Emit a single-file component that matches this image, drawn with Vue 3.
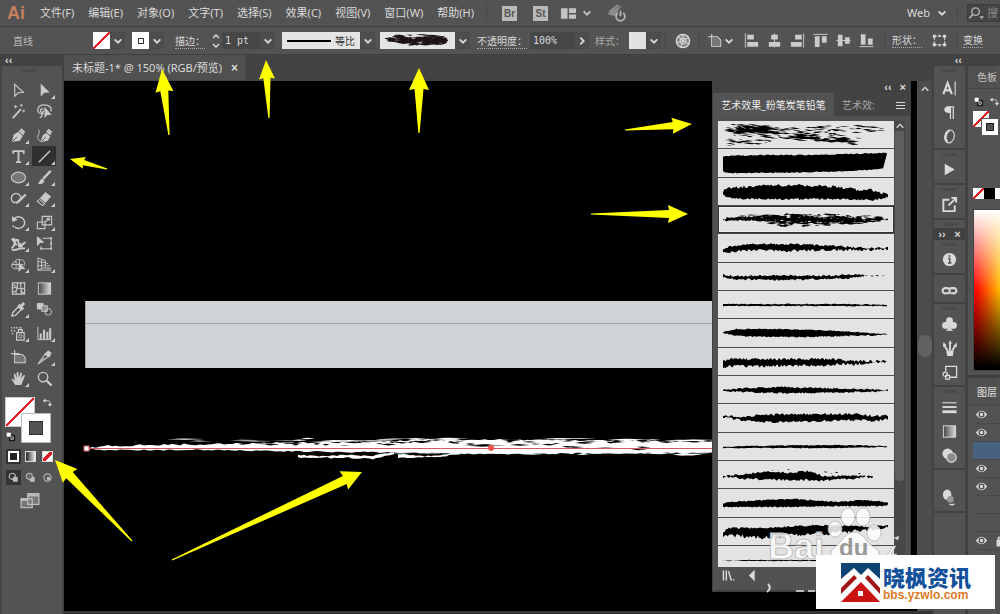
<script setup>
const menus = ['文件(F)', '编辑(E)', '对象(O)', '文字(T)', '选择(S)', '效果(C)', '视图(V)', '窗口(W)', '帮助(H)']

const chev = '<path d="M1.5 3l3 3 3-3" stroke-width="1.6"/>'

// 18 x 18 glyphs, drawn with the current text colour
const icons = {
  select: '<path d="M5 2.5v12.5l3.8-3.6 5.4-.4z" stroke-width="1.2"/>',
  direct: '<path d="M5 1.500v14l4-4 5.500-.3z" fill="currentColor" stroke="none"/>',
  wand: '<path d="M3 16L11.500 6.500" stroke-width="2"/><path d="M6 2v4M4 4h4M12 1v3M10.500 2.500h3M14.500 7v3M13 8.500h3"/>',
  lasso: '<path d="M8 11C3 12 1 9.500 2 6s6-5 10-3.500 5 4 3.500 6.500M8 6.500c-3-1-4 1-3 2.500s3 1 3-1M6 11c1 2 0 4-2 4.500" stroke-width="1.400"/><path d="M9 4v12l3-3.200 4.500-.2z" fill="currentColor" stroke="none"/>',
  pen: '<path d="M2 16l2-8 5-3 4.500 4.500-3 5z" fill="currentColor" stroke="none"/><path d="M10 3.500l4.500 4.500M11.500 2l4 4" stroke-width="2"/><path d="M2.500 15.500l5-5" stroke="#535353"/>',
  curve: '<path d="M2 3c4 1-1 6 0 9 .5 2 2 3 4 3.500"/><path d="M5 16l2-7 4-3 4 4-2.500 4.500z" fill="currentColor" stroke="none"/><path d="M11.500 4l4 4M13 2.500l3.500 3.500" stroke-width="2"/><path d="M6 15l4.500-4.500" stroke="#535353"/>',
  type: '<path d="M3.500 6V3.300h11V6M9 3.300v12M6.300 15h5.400" stroke-width="1.900"/>',
  line: '<path d="M3 15L15 3" stroke-width="1.500"/>',
  ellipse: '<ellipse cx="9" cy="9" rx="7.500" ry="5.700" fill="#777" stroke-width="1.200"/>',
  brush: '<path d="M7.500 10.500L15.500 2" stroke-width="2.600"/><path d="M1.500 15.500c3 0 1.500-4 4.500-4.800 2.500 0 3.500 2 2 3.700-1.500 1.800-4.500 2-6.500 1.100z" fill="currentColor" stroke="none"/>',
  shaper: '<path d="M8 12.500C4 14.500 1 12 1.500 8S6 2.500 9 4.500s2.500 3 2 5" stroke-width="1.500"/><path d="M6 15l2-4 8-7 1.500 1.500-8 8z" fill="currentColor" stroke="none"/>',
  eraser: '<path d="M3 10l7-8 6 5-7 8z" fill="currentColor" stroke="none"/><path d="M2.500 10.500L1.500 12l5.500 4.500 2-1.500" stroke-width="1.200"/><path d="M4 9l6 5" stroke="#535353"/>',
  rotate: '<path d="M4 5.500C8 1 15 3 15.500 9c0 5-6 8-10.500 5" stroke-width="1.600"/><path d="M3 12l1 2" stroke-width="1.500"/><path d="M2 2l.5 6.500L8 6z" fill="currentColor" stroke="none"/>',
  scale: '<path d="M1.500 8.500h8v7h-8zM6.500 2.500h10v9H6.500zM9 9l5-4.500M11 4.500h3v3" stroke-width="1.200"/>',
  width: '<path d="M1.500 14c4-1 3-9 6-9s0 7 3 7 3-4 6-4M2 4l5 7M2 15.500c5 2 8-3 14-1" stroke-width="2"/><circle cx="4" cy="5" r="1.500" fill="currentColor"/><circle cx="11" cy="11" r="2" fill="currentColor"/>',
  free: '<path d="M1 1v11l3.500-3.500L9 8z" fill="currentColor" stroke="none"/><path d="M7 3.500h9v11H5.500V12" stroke-width="1.100"/><path d="M15 2.500h2v2h-2zM15 13.500h2v2h-2zM4.500 13.500h2v2h-2zM15 8h2v2h-2z" fill="currentColor" stroke="none"/>',
  builder: '<path d="M9 13C4 15 1 12 2 9s4-2 4-4 8-2 9 1 0 4-1 5M2 9h12M6.500 5v8M10 4v5"/><path d="M9 7v10l3-3 4.500-.3z" fill="currentColor" stroke="none"/>',
  perspective: '<path d="M2 2v13h14M2 2l8 3v7l-8 3M2 6l8 1M2 10.500l8-1M6 3.500v10M11 8h2M11 10.500h4M10 13h6"/>',
  mesh: '<path d="M2.500 3h13v12h-13zM2.500 9c4-4 8 4 13-1M7 3c4 4-3 8 0 12M11.500 3c-2 4 3 8 0 12M3 5l4 2M11 12l4 2M3 13l4-2" stroke-width="1.200"/>',
  gradient: '<rect x="2.500" y="3" width="13" height="12" fill="url(#tone)"/>',
  dropper: '<path d="M2 16l1-4 6-6 3 3-6 6z" stroke-width="1.500"/><path d="M9 4l5 5M10.500 6.500L15 2" stroke-width="3"/>',
  blend: '<path d="M1.500 2.500h6v6h-6z" fill="currentColor"/><path d="M6 5h6v6H6z" fill="#8c8c8c"/><circle cx="13" cy="11.500" r="3.500"/>',
  spray: '<path d="M7 8h8v8H7zM9 8V5h4v3M9.500 3h3" stroke-width="1.300"/><circle cx="11" cy="12" r="1.800"/><path d="M1 3h1.500M4 3h1.500M6.500 3H8M1 6h1.500M4 6h1.500M2 9h1.500" stroke-width="1.600"/>',
  graph: '<path d="M2 2v13.500h14"/><path d="M5 15V9M8.500 15V5M12 15V7.500M15 15V3.500" stroke-width="2.200"/>',
  artboard: '<path d="M5 1v14M1 5h9M5 14.500h11V9l-3-3H5z" stroke-width="1.300"/><path d="M6 7h6l3 3v4H6z" fill="#777" stroke="none"/>',
  slice: '<path d="M2 16l8-11 3.500 3z" stroke-width="1.200"/><path d="M9 5.500L13 2l3 2-2 4.500z" fill="currentColor"/><path d="M6 12l3-2"/>',
  hand: '<path d="M5.500 16C4 13 2.500 11.500 1.500 9.500c1-.8 2 0 3.500 2L4 4.500c.8-1 1.600-.5 2 .5l1.200 4L7 3c.5-1.200 1.700-1 2 0l.4 5.500L11 3.200c.8-1 1.800-.5 1.700.5L12 9l2.300-3.500c1-.6 1.800 0 1.400 1L13.500 12 12 16z" fill="currentColor" stroke="none"/>',
  zoom: '<circle cx="7.500" cy="7.500" r="5" stroke-width="1.500"/><path d="M11.500 11.500l5 5" stroke-width="2.400"/>',
  character: '<path d="M2.500 15L7 3l4.500 12M4 11h6" stroke-width="2.200"/><path d="M15 1.500v15" stroke-width="1.200"/>',
  paragraph: '<path d="M10 3v13M13 3v13M8 3h6" stroke-width="1.300"/><path d="M10 2.500C5 2 3.500 4 3.500 6s2 4 6.500 3.500z" fill="currentColor" stroke="none"/>',
  opentype: '<ellipse cx="9" cy="9" rx="5" ry="6.800" transform="rotate(15 9 9)" stroke-width="1.200"/><path d="M7 14.500C3.500 12 4.500 5 9 2.500" stroke-width="2"/>',
  play: '<path d="M4 3v12l10.500-6z" fill="currentColor" stroke="none"/>',
  exportIcon: '<path d="M9 4H2.500v12h12v-6" stroke-width="2"/><path d="M8 10l7-7M11 2h5v5" stroke-width="2"/>',
  info: '<circle cx="9" cy="9" r="7" fill="currentColor" stroke="none"/><path d="M7.500 8H9.300v4.500M7.300 12.700h3.800" stroke="#535353" stroke-width="1.500"/><circle cx="9" cy="5.300" r="1.100" fill="#535353" stroke="none"/>',
  link: '<path d="M8 6.500H5a2.800 2.800 0 100 5.500h2.500c1.500 0 2-1.500 1.500-3M10 12h3a2.800 2.800 0 100-5.500h-2.500c-1.500 0-2 1.500-1.500 3" stroke-width="2.200"/>',
  club: '<g fill="currentColor" stroke="none"><circle cx="9" cy="5" r="3.600"/><circle cx="4.800" cy="10" r="3.600"/><circle cx="13.200" cy="10" r="3.600"/><path d="M8 8h2c0 4 .5 6 3 7.500H5C7.500 14 8 12 8 8z"/></g>',
  brushes: '<path d="M5.500 11h8l-1 6h-6z" fill="currentColor" stroke="none"/><path d="M7 11L3.500 6M9.500 11V3M12 11l3-5" stroke-width="2"/><path d="M2 7.500L2.500 2 6 5.500zM8 4l1.500-4 2 4zM13 6.500L17 2.500 16.500 8z" fill="currentColor" stroke="none"/>',
  symbol: '<path d="M5 8V2.500h11.500V14H9" stroke-width="1.400"/><circle cx="4.500" cy="11" r="2.300" stroke-width="1.300"/><path d="M5 12h4v4H5z" stroke-width="1.300"/>',
  stroke: '<path d="M1.500 4h15" stroke-width="1.200"/><path d="M1.500 8.500h15" stroke-width="2"/><path d="M1.500 13.500h15" stroke-width="3"/>',
  transparency: '<circle cx="7" cy="7" r="5.500" fill="currentColor" stroke="none"/><circle cx="11" cy="11" r="5" fill="#8a8a8a" stroke-width="1.400"/>',
  appearance: '<ellipse cx="6.500" cy="6" rx="4.500" ry="5.500" fill="currentColor" stroke="none"/><circle cx="10" cy="11" r="3.500" fill="#999" stroke="none"/><path d="M9 16c2 1 4 1 5-.5" stroke-width="1.500"/>',
  globe: '<circle cx="9" cy="9" r="6.600" fill="#858585" stroke-width="1.400"/><path d="M9 9V2.500M9 9l5.500-3.500M9 9l6 3M9 9l-2 6.500M9 9l-6.500 2M9 9L4 4.500"/><circle cx="9" cy="9" r="3"/>',
  page: '<path d="M5 2v3M1 5h10l3.500 3.500V15H5V5" stroke-width="1.100"/><path d="M5.500 6h5l3.500 3v5.500H5.500z" fill="#777" stroke="none"/>',
  al: '<path d="M2.500 1.500v15"/><path d="M4.500 3h7v5h-7zM4.500 10.500h11.500v5H4.500z" fill="currentColor" stroke="none"/>',
  ac: '<path d="M9 1.500v15"/><path d="M5.500 3h7v5h-7zM3 10.500h12v5H3z" fill="currentColor" stroke="none"/>',
  ar: '<path d="M15.500 1.500v15"/><path d="M6.500 3h7v5h-7zM2 10.500h11.500v5H2z" fill="currentColor" stroke="none"/>',
  at: '<path d="M1.500 2.500h15"/><path d="M3 4.500h5V16H3zM10.500 4.500h5v7h-5z" fill="currentColor" stroke="none"/>',
  am: '<path d="M1.500 9h15"/><path d="M3 3h5v12H3zM10.500 5.500h5v7h-5z" fill="currentColor" stroke="none"/>',
  ab: '<path d="M1.500 15.500h15"/><path d="M3 2.500h5v11H3zM10.500 7h5v6.500h-5z" fill="currentColor" stroke="none"/>',
  bounds: '<path d="M3.500 4.500h11v9h-11z" stroke-dasharray="3 1"/><path d="M2 3h3v3H2zM13 3h3v3h-3zM2 12h3v3H2zM13 12h3v3h-3zM8 3h2v2H8zM8 13h2v2H8z" fill="currentColor" stroke="none"/>',
  arrange: '<path d="M1 3.500h7v11H1zM9.500 3.500H17v5H9.500zM9.500 10H17v4.500H9.500z" fill="currentColor" stroke="none"/>',
  gpu: '<path d="M1 10L14 2 8 12z" fill="#8d8d8d" stroke="none"/><path d="M3 8l8-6" stroke="#8d8d8d" stroke-width="2"/><path d="M10.500 9a4 4 0 105 0M13 7v5" stroke-width="1.600"/>',
  eye: '<path d="M3 9q6-8 12 0q-6 8-12 0z" fill="#d8d8d8" stroke="none"/><circle cx="9" cy="9" r="2.500" stroke="#4c4c4c" stroke-width="1.300"/>',
  swap: '<path d="M5 6h5q3 0 3 3v4" stroke-width="1.300"/><path d="M1.500 6L6 2.500v7zM9.500 11h7L13 16z" fill="currentColor" stroke="none"/>',
  defaults: '<path d="M7 7h9v9H7z" fill="#111" stroke="#111"/><path d="M9.500 9.500h4v4h-4z" stroke-width="1.500"/><path d="M2 2h8v8H2z" fill="#fff" stroke="#222"/>',
  mode1: '<circle cx="7" cy="7" r="5" stroke-width="1.800"/><path d="M8 8h8v8H8z" fill="currentColor" stroke="none"/>',
  mode2: '<path d="M8 8h8v8H8z" fill="currentColor" stroke="none"/><circle cx="7" cy="7" r="5" fill="#666" stroke-width="1.800"/>',
  mode3: '<circle cx="9" cy="9" r="6" stroke-width="1.800"/><path d="M8 8h5v5H8z" fill="currentColor" stroke="none"/>',
  screen: '<path d="M1 7h10v8H1zM7 2.500h10V12H7z" fill="#777" stroke-width="1.200"/><path d="M7 4h10M1 8h6" stroke-width="2"/>',
  library: '<path d="M2 2v14M6 2v14M9 3l4 13" stroke-width="2"/><path d="M15 15h2" stroke-width="2"/>'
}

const toolGroups = [
  [['select', '选择工具'], ['direct', '直接选择工具', 1], ['wand', '魔棒工具'], ['lasso', '套索工具']],
  [['pen', '钢笔工具', 1], ['curve', '曲率工具'], ['type', '文字工具', 1], ['line', '直线段工具', 1], ['ellipse', '椭圆工具', 1], ['brush', '画笔工具', 1], ['shaper', 'Shaper 工具', 1], ['eraser', '橡皮擦工具', 1]],
  [['rotate', '旋转工具', 1], ['scale', '比例缩放工具', 1], ['width', '宽度工具', 1], ['free', '自由变换工具'], ['builder', '形状生成器工具', 1], ['perspective', '透视网格工具', 1]],
  [['mesh', '网格工具'], ['gradient', '渐变工具'], ['dropper', '吸管工具', 1], ['blend', '混合工具']],
  [['spray', '符号喷枪工具', 1], ['graph', '柱形图工具', 1]],
  [['artboard', '画板工具'], ['slice', '切片工具', 1], ['hand', '抓手工具', 1], ['zoom', '缩放工具']]
]

const dockTop = [
  { cls: 'tall', grip: true, items: [['character', '字符'], ['paragraph', '段落'], ['opentype', 'OpenType']] },
  { cls: 'single', grip: true, items: [['play', '动作']] },
  { cls: 'single', grip: true, items: [['exportIcon', '资源导出']] }
]
const dockBottom = [
  { cls: 'single', grip: true, items: [['info', '信息']] },
  { cls: 'link', grip: false, items: [['link', '链接']] },
  { cls: 'triple', grip: true, items: [['club', '符号'], ['brushes', '画笔'], ['symbol', '图形样式']] },
  { cls: 'triple', grip: true, items: [['stroke', '描边'], ['gradient', '渐变'], ['transparency', '透明度']] },
  { cls: 'last', grip: false, items: [['appearance', '外观']] }
]

const aligns = [['al', '水平左对齐'], ['ac', '水平居中对齐'], ['ar', '水平右对齐'], ['at', '垂直顶对齐'], ['am', '垂直居中对齐'], ['ab', '垂直底对齐']]

const layers = [1, 1, 2, 1, 1, 0, 0, 1]

// Seeded noise keeps every stroke stable between renders
function noise(seed) {
  let s = seed * 7919 + 17
  return () => {
    s = (s * 1103515245 + 12345) % 2147483648
    return s / 2147483648
  }
}
function at(keys, x, i) {
  for (let k = 1; k < keys.length; k++) {
    if (x <= keys[k][0]) {
      const a = keys[k - 1]
      const b = keys[k]
      return a[i] + ((b[i] - a[i]) * (x - a[0])) / (b[0] - a[0])
    }
  }
  return keys[keys.length - 1][i]
}
// Solid stroke with ragged edges; keys are [x, top, bottom]
function rough(keys, jt, jb, step, seed) {
  const r = noise(seed)
  const top = []
  const bottom = []
  const end = keys[keys.length - 1][0]
  for (let x = keys[0][0]; x <= end; x += step) {
    const t = at(keys, x, 1)
    const b = at(keys, x, 2)
    top.push(`${x.toFixed(1)} ${(t + (r() - 0.5) * jt).toFixed(1)}`)
    bottom.unshift(`${x.toFixed(1)} ${(b + (r() - 0.5) * jb).toFixed(1)}`)
  }
  return 'M' + top.concat(bottom).join('L') + 'Z'
}
// Loose flecks between the top and bottom of the keys
function flecks(n, keys, len, thick, slope, seed) {
  const r = noise(seed)
  const x0 = keys[0][0]
  const x1 = keys[keys.length - 1][0]
  let d = ''
  for (let i = 0; i < n; i++) {
    const l = len * (0.3 + r())
    const x = x0 + r() * (x1 - x0 - l)
    const t = at(keys, x, 1)
    const y = t + r() * (at(keys, x, 2) - t)
    const h = thick * (0.3 + r())
    const k = slope * l
    d += `M${x.toFixed(1)} ${y.toFixed(1)}l${(l * 0.4).toFixed(1)} ${(k * 0.4 - h / 2).toFixed(1)}l${(l * 0.6).toFixed(1)} ${(k * 0.6 + h * 0.3).toFixed(1)}l${(-l * 0.5).toFixed(1)} ${(h * 0.6 - k * 0.5).toFixed(1)}Z`
  }
  return d
}

const dryKeys = [[5, 12, 14], [25, 9, 14], [60, 8, 17], [90, 8, 18], [130, 8, 18], [150, 10, 16], [170, 12, 14]]
const strokes = [
  flecks(120, [[5, 3, 14], [40, 3, 16], [90, 9, 20], [135, 14, 23], [145, 17, 22]], 13, 1.5, 0.12, 3) +
    flecks(34, [[85, 4, 13], [120, 4, 14], [170, 5, 9]], 12, 1.4, 0.04, 9) +
    flecks(26, [[6, 17, 25], [40, 18, 23], [55, 18, 20]], 9, 1.2, 0.05, 5) +
    flecks(40, [[16, 4, 9], [45, 6, 12], [65, 9, 14]], 16, 2.4, 0.12, 8) +
    flecks(24, [[70, 13, 16], [110, 17, 20], [135, 19, 22]], 14, 2.2, 0.08, 14),
  rough([[5, 8, 22], [7, 7, 24], [40, 6, 24], [100, 6, 23], [130, 5, 22], [165, 4, 20], [169, 4, 5]], 1, 1, 2, 2),
  rough([[5, 13, 16], [8, 10, 20], [40, 8, 21], [75, 7, 21], [120, 9, 21], [140, 12, 22], [155, 12, 22], [170, 17, 19]], 3, 2, 1.5, 4),
  flecks(210, dryKeys, 10, 2, 0.01, 11) + rough([[5, 13, 14], [30, 11, 14], [60, 11, 15], [90, 11, 16], [130, 12, 16], [155, 12, 14], [170, 13, 13]], 3, 3, 1.5, 6) + flecks(30, [[48, 17, 21], [90, 17, 20], [115, 16, 19]], 9, 2, 0, 12),
  rough([[5, 15, 19], [12, 12, 18], [35, 10, 16], [65, 10, 17], [100, 11, 16], [130, 13, 16], [150, 14, 16], [170, 14, 15]], 2, 2.5, 1.5, 7),
  rough([[5, 12, 14], [15, 13, 16], [65, 12, 17], [100, 13, 16], [130, 12, 15], [146, 12, 13]], 2, 2, 1.5, 8) + flecks(12, [[130, 11, 14], [168, 12, 13]], 4, 1.2, 0, 9),
  rough([[5, 13, 15], [50, 13, 15], [80, 13, 15], [130, 13, 15], [170, 14, 15]], 0.8, 0.8, 2, 10),
  rough([[5, 13, 14], [18, 10, 17], [60, 10, 18], [95, 11, 18], [120, 12, 17], [170, 15, 16]], 1, 1.6, 1.5, 11),
  rough([[5, 13, 19], [12, 11, 18], [60, 11, 18], [110, 11, 17], [140, 13, 16], [170, 13, 14]], 2.5, 3, 1.3, 12),
  rough([[5, 14, 15], [30, 12, 16], [60, 11, 17], [95, 12, 17], [140, 13, 16], [170, 14, 15]], 1.6, 1.6, 1.5, 13),
  rough([[5, 11, 13], [22, 13, 16], [40, 11, 18], [100, 10, 17], [140, 10, 16], [155, 12, 17], [170, 11, 15]], 2.5, 2.5, 1.5, 14),
  rough([[5, 14, 15], [30, 13, 15], [120, 12, 15], [170, 13, 14]], 0.8, 0.8, 2, 15),
  rough([[5, 15, 16], [30, 13, 18], [50, 10, 18], [70, 12, 19], [92, 10, 19], [105, 15, 20], [125, 15, 18], [156, 15, 16]], 2, 2.5, 1.5, 16) + flecks(9, [[40, 7, 9], [130, 12, 14], [170, 13, 14]], 4, 1.2, 0, 17),
  rough([[5, 14, 18], [25, 12, 18], [75, 10, 18], [120, 13, 17], [145, 11, 17], [168, 13, 17], [170, 14, 16]], 1.3, 1.3, 1.5, 18),
  rough([[5, 15, 19], [10, 10, 17], [45, 10, 20], [80, 8, 17], [115, 7, 15], [150, 9, 12], [170, 7, 10]], 1.6, 4, 1.5, 19),
  rough([[5, 15, 15], [30, 14, 15], [110, 14, 15]], 0.6, 0.6, 2, 20)
]

const previewStroke = flecks(110, [[5, 6, 9], [16, 2, 11], [40, 2, 13], [58, 3, 13], [70, 5, 12]], 13, 1.8, 0.03, 21) +
  rough([[5, 7, 8], [25, 6, 9], [45, 5, 10], [68, 7, 10]], 3, 3, 1.5, 22) + flecks(8, [[26, 11, 14], [40, 12, 14]], 8, 1.8, -0.1, 24)

const art = {
  body: rough([[88, 448, 449], [105, 446, 450], [150, 445, 450], [210, 444, 450], [260, 443, 451], [350, 442, 452], [420, 440, 453], [520, 440, 454], [640, 441, 453], [720, 442, 453]], 2, 1.5, 4, 31),
  edge: flecks(50, [[160, 439, 442], [350, 438, 442], [720, 439, 443]], 34, 1.6, 0, 32) + flecks(36, [[380, 451, 454], [720, 451, 455]], 26, 2, 0, 36),
  low: rough([[298, 455, 458], [320, 456, 458], [350, 455, 458], [372, 456, 459], [394, 452, 454]], 1.2, 1.5, 3, 33) + rough([[398, 454, 458], [425, 456, 457], [445, 455, 457], [458, 450, 452]], 1, 1, 3, 34),
  gaps: flecks(36, [[220, 443, 445], [400, 442, 446], [720, 441, 451]], 18, 1.6, 0.02, 35) + flecks(34, [[330, 440, 443], [720, 440, 443]], 15, 1.6, 0.03, 38)
}

// [tip x, tip y, tail x, tail y, head length, head half-width]
const arrows = [
  [162, 69, 169, 135, 23, 9], [266, 60, 269, 118, 19, 8], [419, 68, 419, 133, 22, 10],
  [70, 159, 107, 169, 15, 6], [692, 124, 625, 130, 20, 8], [688, 214, 591, 214, 20, 9],
  [55, 460, 132, 541, 22, 10], [362, 472, 172, 560, 20, 10]
].map(([x, y, tx, ty, len, half]) => {
  const d = Math.hypot(tx - x, ty - y)
  const ux = (tx - x) / d
  const uy = (ty - y) / d
  const p = (a, b) => `${(x + ux * a - uy * b).toFixed(1)},${(y + uy * a + ux * b).toFixed(1)}`
  return [p(0, 0), p(len, half), p(len - 1, half * 0.45), p(d, 0.6), p(d, -0.6), p(len - 1, -half * 0.45), p(len, -half)].join(' ')
})
</script>

<template>
  <div class="app">
    <svg class="defs" aria-hidden="true">
      <linearGradient id="tone"><stop offset="0" stop-color="#444" /><stop offset="1" stop-color="#ddd" /></linearGradient>
    </svg>

    <header class="menubar">
      <strong class="logo">Ai</strong>
      <nav class="menus">
        <button v-for="m in menus" :key="m" type="button">{{ m }}</button>
      </nav>
      <div class="apps">
        <button type="button" class="chip">Br</button>
        <button type="button" class="chip">St</button>
        <button type="button" class="arrange" aria-label="排列文档">
          <svg class="i17" viewBox="0 0 18 18" v-html="icons.arrange" />
          <svg class="chev" viewBox="0 0 9 9" v-html="chev" />
        </button>
        <button type="button" class="gpu" aria-label="GPU 性能"><svg class="i20" viewBox="0 0 18 18" v-html="icons.gpu" /></button>
      </div>
      <div class="space">
        <label class="workspace-pick"><select aria-label="工作区"><option>Web</option></select><svg class="chev" viewBox="0 0 9 9" v-html="chev" /></label>
        <label class="search">
          <svg class="i17" viewBox="0 0 18 18"><circle cx="8" cy="7" r="4" stroke-width="1.500" /><path d="M5 10l-3.500 4" stroke-width="1.800" /><path d="M12 12h5l-2.500 3z" fill="currentColor" stroke="none" /></svg>
          <input type="text" placeholder="搜索" aria-label="搜索">
        </label>
      </div>
    </header>

    <section class="control" aria-label="控制栏">
      <span class="kind">直线</span>
      <div class="cell">
        <button type="button" class="sw none" aria-label="填色" />
        <button type="button" class="dd" aria-label="填色选项"><svg class="chev" viewBox="0 0 9 9" v-html="chev" /></button>
      </div>
      <div class="cell">
        <button type="button" class="sw box" aria-label="描边颜色"><i /></button>
        <button type="button" class="dd" aria-label="描边颜色选项"><svg class="chev" viewBox="0 0 9 9" v-html="chev" /></button>
      </div>
      <label class="lab" for="weight"><u>描边：</u></label>
      <div class="cell">
        <button type="button" class="step" aria-label="调整粗细"><svg viewBox="0 0 10 16"><path d="M2 5l3-3 3 3M2 11l3 3 3-3" stroke-width="1.500" /></svg></button>
        <input id="weight" class="field weight" type="text" value="1 pt">
        <button type="button" class="dd" aria-label="粗细列表"><svg class="chev" viewBox="0 0 9 9" v-html="chev" /></button>
      </div>
      <div class="cell">
        <button type="button" class="profile"><i />等比</button>
        <button type="button" class="dd" aria-label="宽度配置"><svg class="chev" viewBox="0 0 9 9" v-html="chev" /></button>
      </div>
      <div class="cell">
        <button type="button" class="brushpick" aria-label="画笔定义"><svg viewBox="0 0 75 17"><path :d="previewStroke" fill="#1d1416" stroke="none" /></svg></button>
        <button type="button" class="dd" aria-label="画笔列表"><svg class="chev" viewBox="0 0 9 9" v-html="chev" /></button>
      </div>
      <label class="lab" for="opacity"><u>不透明度：</u></label>
      <div class="cell">
        <input id="opacity" class="field opacity" type="text" value="100%">
        <button type="button" class="dd" aria-label="不透明度滑块"><svg class="chev side" viewBox="0 0 9 9" v-html="chev" /></button>
      </div>
      <span class="lab dim">样式：</span>
      <div class="cell">
        <button type="button" class="sw flat" aria-label="图形样式" />
        <button type="button" class="dd" aria-label="样式列表"><svg class="chev" viewBox="0 0 9 9" v-html="chev" /></button>
      </div>
      <div class="cell mid rule"><button type="button" aria-label="重新着色"><svg class="i18" viewBox="0 0 18 18" v-html="icons.globe" /></button></div>
      <div class="cell mid rule"><button type="button" aria-label="对齐画板"><svg class="i17" viewBox="0 0 18 18" v-html="icons.page" /><svg class="chev" viewBox="0 0 9 9" v-html="chev" /></button></div>
      <div class="cell aligns"><button v-for="a in aligns" :key="a[0]" type="button" :aria-label="a[1]"><svg class="i17" viewBox="0 0 18 18" v-html="icons[a[0]]" /></button></div>
      <div class="cell shape rule"><button type="button"><u>形状：</u></button><button type="button" aria-label="隔离"><svg class="i17" viewBox="0 0 18 18" v-html="icons.bounds" /></button></div>
      <div class="cell transform rule"><button type="button"><u>变换</u></button></div>
    </section>

    <div class="work">
      <aside class="toolbox" aria-label="工具">
        <div class="head"><button type="button" aria-label="折叠工具">‹‹</button></div>
        <div class="tools">
          <i class="grip" />
          <div v-for="(g, k) in toolGroups" :key="k" class="group">
            <button v-for="t in g" :key="t[0]" type="button" class="tool" :class="{ on: t[0] === 'line', more: t[2] }" :aria-label="t[1]">
              <svg class="i17" viewBox="0 0 18 18" v-html="icons[t[0]]" />
            </button>
          </div>
          <div class="paint">
            <button type="button" class="fill none" aria-label="填色" />
            <button type="button" class="line" aria-label="描边"><i /></button>
            <button type="button" class="swap" aria-label="互换填色和描边"><svg class="i11" viewBox="0 0 18 18" v-html="icons.swap" /></button>
            <button type="button" class="reset" aria-label="默认填色和描边"><svg class="i11" viewBox="0 0 18 18" v-html="icons.defaults" /></button>
          </div>
          <div class="trio">
            <button type="button" class="on" aria-label="颜色"><i class="sq solid" /></button>
            <button type="button" aria-label="渐变"><i class="sq grad" /></button>
            <button type="button" aria-label="无"><i class="sq none thick" /></button>
          </div>
          <div class="trio modes">
            <button type="button" class="on" aria-label="正常绘图"><svg class="i11" viewBox="0 0 18 18" v-html="icons.mode1" /></button>
            <button type="button" aria-label="背面绘图"><svg class="i11" viewBox="0 0 18 18" v-html="icons.mode2" /></button>
            <button type="button" aria-label="内部绘图"><svg class="i11" viewBox="0 0 18 18" v-html="icons.mode3" /></button>
          </div>
          <button type="button" class="screen" aria-label="更改屏幕模式"><svg class="i20" viewBox="0 0 18 18" v-html="icons.screen" /></button>
        </div>
      </aside>

      <main class="document">
        <div class="tabs">
          <div class="tab"><span>未标题-1* @ 150% (RGB/预览)</span><button type="button" aria-label="关闭">×</button></div>
        </div>
        <div class="stage">
          <div class="canvas">
            <svg class="art" aria-label="画板">
              <g transform="translate(-64 -81)" stroke="none">
                <rect x="85" y="301" width="640" height="67" fill="#d0d4d6" />
                <path d="M85 323.500h640M85.500 301v67" stroke="#a0a4a6" />
                <path :d="art.body" fill="#fff" />
                <path :d="art.edge" fill="#fff" />
                <path :d="art.low" fill="#fff" />
                <path :d="art.gaps" fill="#000" />
                <path d="M87 448.500h630" stroke="#d9545c" />
                <rect x="84" y="446" width="5" height="5" fill="#fff" stroke="#e05a5a" />
                <circle cx="491" cy="448" r="3" fill="#f2524f" />
              </g>
            </svg>

            <section class="brushes" aria-label="画笔库">
              <div class="bar"><button type="button" aria-label="折叠">‹‹</button><button type="button" aria-label="关闭面板">×</button></div>
              <div class="ptabs">
                <button type="button" class="active">艺术效果_粉笔炭笔铅笔</button>
                <button type="button" class="other">艺术效:</button>
                <button type="button" class="pmenu" aria-label="面板菜单"><svg viewBox="0 0 9 8"><path d="M0 1.500h9M0 4.500h9M0 7.500h9" /></svg></button>
              </div>
              <div class="lib">
                <ul>
                  <li v-for="(d, k) in strokes" :key="k"><button type="button" :class="{ picked: k === 3 }" :aria-label="'画笔 ' + (k + 1)"><svg viewBox="0 0 175 28"><path :d="d" fill="#000" stroke="none" /></svg></button></li>
                </ul>
                <div class="pscroll"><svg class="chev" viewBox="0 0 9 9"><path d="M1.500 6l3-3 3 3" stroke-width="1.200" /></svg><i /></div>
              </div>
              <div class="foot">
                <button type="button" aria-label="画笔库菜单"><svg class="i13" viewBox="0 0 18 18" v-html="icons.library" /></button>
                <button type="button" aria-label="上一个画笔库"><svg class="i13" viewBox="0 0 18 18"><path d="M12 1v16L4 9z" fill="currentColor" stroke="none" /></svg></button>
              </div>
            </section>
          </div>
          <div class="vscroll"><svg class="chev" viewBox="0 0 9 9"><path d="M1.500 6l3-3 3 3" stroke-width="1.200" /></svg><i /></div>
        </div>
      </main>

      <aside class="dock" aria-label="面板图标">
        <div class="head"><button type="button" aria-label="展开面板">‹‹</button></div>
        <div class="stack">
          <section v-for="(s, k) in dockTop" :key="k" :class="s.cls">
            <i v-if="s.grip" class="grip" />
            <button v-for="b in s.items" :key="b[0]" type="button" :aria-label="b[1]"><svg class="i17" viewBox="0 0 18 18" v-html="icons[b[0]]" /></button>
          </section>
          <i class="grip loose" />
          <div class="mini"><button type="button" aria-label="收起">››</button><button type="button" aria-label="关闭">×</button></div>
          <section v-for="(s, k) in dockBottom" :key="'b' + k" :class="s.cls">
            <i v-if="s.grip" class="grip" />
            <button v-for="b in s.items" :key="b[0]" type="button" :aria-label="b[1]"><svg class="i17" viewBox="0 0 18 18" v-html="icons[b[0]]" /></button>
          </section>
        </div>
      </aside>

      <aside class="side-panels">
        <div class="head" />
        <button type="button" class="ptab">色板</button>
        <div class="colors">
          <div class="ops">
            <button type="button" aria-label="默认颜色"><svg class="i11" viewBox="0 0 18 18" v-html="icons.defaults" /></button>
            <button type="button" aria-label="互换"><svg class="i11" viewBox="0 0 18 18" v-html="icons.swap" /></button>
          </div>
          <div class="pair-sw"><i class="none" /><i class="ring" /></div>
          <div class="chips"><i class="none" /><i class="black" /><i class="white" /></div>
          <div class="spectrum" />
        </div>
        <button type="button" class="ptab layer-tab">图层</button>
        <ul class="layers">
          <li v-for="(l, k) in layers" :key="k" :class="{ sel: l === 2 }">
            <button v-if="l === 1" type="button" aria-label="切换可视性"><svg class="i17" viewBox="0 0 18 18" v-html="icons.eye" /></button>
            <svg v-if="k === 7" class="lock" viewBox="0 0 9 12"><path d="M2.500 5V2.500h4V5" stroke-width="1.500" /><path d="M1 5h7v6H1z" fill="currentColor" /></svg>
          </li>
        </ul>
      </aside>
    </div>

    <svg class="notes" aria-hidden="true"><polygon v-for="(a, k) in arrows" :key="k" :points="a" fill="#ff0" stroke="none" /></svg>

    <div class="watermark">
      <span>Bai</span>
      <svg viewBox="0 0 76 88">
        <g fill="#fff" fill-opacity=".85" stroke="#aaa" stroke-opacity=".7">
          <ellipse cx="7" cy="22" rx="7" ry="8" /><ellipse cx="20" cy="10" rx="7" ry="9" /><ellipse cx="35" cy="10" rx="7" ry="9" /><ellipse cx="46" cy="26" rx="7" ry="8" />
          <path d="M3 54V44Q12 36 17 29q9-8 18 0q5 8 16 15v10z" />
          <path d="M58 50l7-11h3l-5 8h6l-8 8M66 31l5-2-1 4z" />
        </g>
        <text x="11" y="49">du</text>
        <path d="M-60 77q4 4-1 8" stroke="#ddd" stroke-width="2" />
        <path d="M-32 84h8M-20 84h7" stroke="#bbb" stroke-width="2" />
      </svg>
    </div>

    <a class="badge" href="#">
      <svg viewBox="0 0 39 39">
        <path d="M0 0h39v16l-12-11-7 7-7-7-13 11z" fill="#0d4473" stroke="none" />
        <path d="M0 25L13 12l3 3L0 31zM24 15l3-3 12 13v6z" fill="#a11616" stroke="none" />
        <path d="M0 39L20 19l19 20z" fill="#c91313" stroke="none" />
        <path d="M17 28h5v5h-5z" fill="#fff" stroke="none" />
      </svg>
      <span><b>晓枫资讯</b><em>bbs.yzwlo.com</em></span>
    </a>
  </div>
</template>

<style>
body { background: #535353; }
</style>

<style scoped>
.app { position: relative; display: flex; flex-direction: column; height: 100vh; overflow: hidden; background: #535353; color: #dadada; font: 11px/16px "Noto Sans", "Noto Sans CJK SC", sans-serif; }
.app * { box-sizing: border-box; }
.defs { position: absolute; width: 0; height: 0; }
button, input, select { margin: 0; padding: 0; border: 0; background: none; color: inherit; font: inherit; appearance: none; border-radius: 0; }
button { display: flex; align-items: center; justify-content: center; flex: none; white-space: nowrap; }
svg { display: block; flex: none; fill: none; stroke: currentColor; }
ul { margin: 0; padding: 0; list-style: none; }
u { text-decoration: none; border-bottom: 1px dotted #aaa; line-height: 14px; }
.chev { width: 10px; height: 10px; }
.side { transform: rotate(-90deg); }
.i11 { width: 11px; height: 11px; }
.i13 { width: 13px; height: 13px; }
.i17 { width: 17px; height: 17px; }
.i18 { width: 18px; height: 18px; }
.i20 { width: 20px; height: 20px; }
.none { background: linear-gradient(to bottom right, #fff calc(50% - 1px), #e01b24 calc(50% - 1px), #e01b24 calc(50% + 1px), #fff calc(50% + 1px)); }

.menubar { display: flex; align-items: center; height: 27px; flex: none; border-bottom: 1px solid #404040; padding-left: 7px; }
.logo { width: 33px; font: bold 18px/24px "Liberation Sans", sans-serif; color: #c4805c; }
.menus { display: flex; gap: 14px; }
.apps { display: flex; align-items: center; margin-left: 12px; padding-left: 15px; border-left: 1px solid #484848; gap: 16px; color: #c4c4c4; }
.chip { width: 15px; height: 15px; background: #b9b9b9; color: #555; font: bold 10px/15px "Liberation Sans", sans-serif; }
.arrange { gap: 5px; margin-left: -4px; }
.gpu { margin-left: -2px; color: #b4b4b4; }
.space { display: flex; align-items: center; height: 22px; margin-left: auto; }
.workspace-pick { display: flex; align-items: center; gap: 4px; padding-right: 10px; border-right: 1px solid #484848; }
.workspace-pick select { width: 26px; }
.search { display: flex; align-items: center; gap: 2px; margin-left: 9px; width: 33px; height: 18px; background: #454545; border: 1px solid #3c3c3c; overflow: hidden; color: #b5b5b5; }
.search input { width: 24px; }
.search input::placeholder { color: #888; opacity: 1; }

.control { display: grid; grid-template-columns: 93px 39px 43px 35px 72px 98px 97px 53px 65px 34px 36px 34px 41px 144px 72px 1fr; align-items: center; height: 28px; flex: none; border-bottom: 1px solid #3f3f3f; font-size: 10px; }
.kind { padding-left: 13px; color: #bbb; }
.cell { display: flex; align-items: center; height: 18px; min-width: 0; }
.mid { justify-content: center; }
.rule { border-left: 1px solid #464646; }
.lab { white-space: nowrap; }
.dim { color: #aaa; }
.sw { width: 17px; height: 17px; }
.box { background: #fff; }
.box i { width: 6px; height: 6px; border: 1px solid #333; }
.flat { background: #e2e2e2; }
.dd { width: 15px; height: 17px; border: 1px solid #4a4a4a; background: #4d4d4d; }
.step { width: 12px; }
.step svg { width: 10px; height: 16px; }
.field { height: 17px; background: #474747; font: 10px/16px "DejaVu Sans Mono", monospace; padding-left: 3px; }
.weight { width: 38px; }
.opacity { width: 44px; }
.profile { width: 78px; height: 17px; gap: 4px; background: #e4e4e4; color: #333; }
.profile i { width: 44px; height: 2px; background: #000; }
.brushpick { width: 75px; height: 17px; background: #e4e4e4; }
.brushpick svg { width: 75px; height: 17px; }
.aligns { padding-left: 3px; gap: 6px; color: #ccc; }
.shape { padding-left: 7px; gap: 9px; }
.transform { padding-left: 6px; }

.work { display: flex; flex: 1; min-height: 0; }
.head { display: flex; align-items: center; height: 11px; flex: none; background: #424242; font: bold 11px/11px "Liberation Sans", sans-serif; }
.grip { display: block; width: 16px; height: 3px; margin: 0 auto; background: repeating-linear-gradient(to right, #404040 0 1px, #555 1px 2px); }

.toolbox { display: flex; flex-direction: column; width: 64px; flex: none; border-right: 2px solid #424242; }
.toolbox .head { padding-left: 5px; }
.tools { flex: 1; border-left: 2px solid #464646; padding-top: 3px; }
.tools > .grip { margin: 0 20px 8px; }
.group { display: grid; grid-template-columns: 24px 24px; column-gap: 2px; grid-auto-rows: 21px; padding-left: 4px; margin-bottom: 3px; color: #c9c9c9; }
.tool { position: relative; height: 20px; }
.tool.on { background: #303030; }
.tool.more::after { content: ""; position: absolute; right: 1px; bottom: 1px; border: 2px solid; border-color: transparent #ccc #ccc transparent; }
.paint { position: relative; height: 46px; margin: 8px 0 6px 3px; }
.paint button { position: absolute; }
.paint .fill { left: 0; top: 0; width: 30px; height: 30px; border: 1px solid #ccc; }
.paint .line { left: 16px; top: 16px; width: 30px; height: 30px; background: #fff; border: 1px solid #bbb; }
.line i { width: 14px; height: 14px; background: #535353; border: 1px solid #333; }
.paint .swap { left: 37px; top: 0; }
.paint .reset { left: 0; top: 34px; }
.trio { display: grid; grid-template-columns: 15px 15px 15px; column-gap: 2px; padding-left: 4px; height: 15px; }
.trio button { height: 15px; }
.trio .on { background: #333; }
.sq { width: 11px; height: 11px; border: 1px solid #ddd; }
.solid { border: 2px solid #fff; background: #222; }
.grad { background: linear-gradient(to right, #222, #eee); }
.thick { background: linear-gradient(to bottom right, #fff calc(50% - 2px), #e01b24 calc(50% - 2px), #e01b24 calc(50% + 2px), #fff calc(50% + 2px)); }
.modes { margin: 6px 0 6px; color: #bbb; }
.screen { margin-left: 18px; color: #bbb; }

.document { display: flex; flex-direction: column; flex: 1; min-width: 0; background: #434343; }
.tabs { display: flex; height: 26px; flex: none; }
.tab { display: flex; align-items: center; gap: 9px; height: 25px; padding: 1px 8px 0; background: #505050; border-right: 1px solid #393939; }
.tab button { font: bold 12px/12px "Liberation Sans", sans-serif; }
.stage { display: flex; flex: 1; min-height: 0; border-bottom: 3px solid #353535; }
.canvas { position: relative; flex: 1; min-width: 0; background: #000; overflow: hidden; }
.art { position: absolute; inset: 0; width: 100%; height: 100%; }
.vscroll, .pscroll { display: flex; flex-direction: column; align-items: center; }
.vscroll { width: 15px; flex: none; padding-top: 3px; background: #4c4c4c; }
.vscroll i { width: 14px; height: 22px; margin-top: 241px; border-radius: 7px; background: #626262; }

.brushes { position: absolute; top: 0; right: 6px; bottom: 19px; width: 199px; display: flex; flex-direction: column; background: #515151; border: 1px solid #3f3f3f; font-size: 10px; }
.bar { display: flex; justify-content: flex-end; align-items: center; gap: 8px; height: 11px; padding-right: 4px; background: #424242; font: bold 11px/11px "Liberation Sans", sans-serif; }
.ptabs { display: flex; height: 23px; background: #434343; }
.ptabs .active { width: 121px; background: #535353; color: #eee; }
.ptabs .other { margin-left: 8px; color: #aaa; }
.pmenu { margin-left: auto; margin-right: 5px; }
.pmenu svg { width: 9px; height: 8px; }
.lib { display: flex; flex: 1; min-height: 0; padding-left: 5px; margin-top: 5px; }
.lib ul { display: grid; grid-template-rows: repeat(15, minmax(0, 1fr)) 21px; width: 176px; }
.lib li { background: #e3e3e3; border-bottom: 1px solid #4a4a4a; overflow: hidden; min-height: 0; }
.lib li:last-child { border: 0; }
.lib li button { width: 100%; align-items: flex-start; justify-content: flex-start; height: 100%; }
.lib li svg { width: 175px; height: 28px; }
.lib .picked { border: 1px solid #333; outline: 1px solid #eee; outline-offset: -2px; }
.lib .picked svg { margin: -1px; }
.pscroll { width: 11px; background: #484848; }
.pscroll i { width: 9px; height: 350px; background: #5e5e5e; border-radius: 0 0 4px 4px; }
.foot { display: flex; align-items: center; gap: 11px; height: 24px; padding: 0 0 7px 9px; border-bottom: 1px solid #434343; }

.dock { width: 35px; flex: none; display: flex; flex-direction: column; background: #424242; }
.dock .head { justify-content: flex-end; padding-right: 5px; }
.stack { flex: 1; margin: 0 2px; background: #535353; overflow: hidden; }
.stack section { display: flex; flex-direction: column; align-items: center; border-bottom: 2px solid #424242; padding-top: 3px; }
.stack section button { height: 24px; width: 31px; }
.tall { height: 84px; }
.tall .grip { margin-bottom: 4px; }
.single { height: 35px; }
.single .grip { margin-bottom: 1px; }
.loose { margin-top: 3px; margin-bottom: 2px; }
.mini { display: flex; align-items: center; justify-content: space-around; height: 12px; background: #404040; font: bold 11px/11px "Liberation Sans", sans-serif; }
.link { height: 29px; }
.triple { height: 83px; }
.triple .grip { margin-bottom: 2px; }
.stack .last { height: 43px; padding-top: 15px; }

.side-panels { width: 33px; flex: none; overflow: hidden; border-left: 1px solid #424242; }
.ptab { height: 22px; padding-left: 9px; font-size: 10px; background: #505050; color: #c6c6c6; }
.colors { height: 290px; padding: 7px 0 0 5px; border-bottom: 3px solid #3f3f3f; border-top: 1px solid #484848; overflow: hidden; }
.ops { display: flex; gap: 5px; height: 11px; }
.pair-sw { position: relative; height: 77px; margin-top: 4px; }
.pair-sw i { position: absolute; left: 0; top: 0; width: 16px; height: 16px; }
.pair-sw .ring { left: 9px; top: 8px; border: 4px solid #fff; outline: 1px solid #555; background: #535353; box-shadow: inset 0 0 0 1px #222; }
.chips { display: grid; grid-template-columns: 11px 11px 11px; height: 11px; }
.black { background: #000; }
.white { background: #fff; }
.spectrum { width: 60px; height: 162px; margin-top: 10px; border: 1px solid #444; background: linear-gradient(to bottom, #fff, transparent 50%, #000 98%), linear-gradient(to right, #f00, #f00 2%, #ff0 60%, #0f0); }
.layer-tab { height: 27px; color: #e2e2e2; }
.layers { border-top: 1px solid #484848; padding-left: 5px; }
.layers li { display: flex; align-items: center; gap: 6px; height: 18px; border-bottom: 1px solid #484848; }
.layers .sel { background: #48617e; }
.lock { width: 9px; height: 12px; }

.notes { position: absolute; inset: 0; width: 100%; height: 100%; pointer-events: none; }
.watermark { position: absolute; left: 768px; top: 507px; display: flex; }
.watermark span { width: 60px; padding-top: 22px; font: bold 36px/36px "Liberation Sans", sans-serif; color: #fffd; -webkit-text-stroke: 1px #bdbdbd; }
.watermark svg { width: 76px; height: 88px; overflow: visible; }
.watermark text { font: bold 24px "Liberation Sans", sans-serif; fill: #999; stroke: none; }
.badge { position: absolute; right: 5px; bottom: 5px; display: flex; align-items: center; gap: 3px; width: 179px; height: 54px; padding-left: 25px; background: #fff; text-decoration: none; }
.badge svg { width: 39px; height: 39px; }
.badge span { display: flex; flex-direction: column; }
.badge b { font: 900 22px/26px "Noto Sans CJK SC", sans-serif; color: #12509b; white-space: nowrap; }
.badge em { font: bold 12px/12px "Liberation Sans", sans-serif; color: #e07a26; }
</style>
